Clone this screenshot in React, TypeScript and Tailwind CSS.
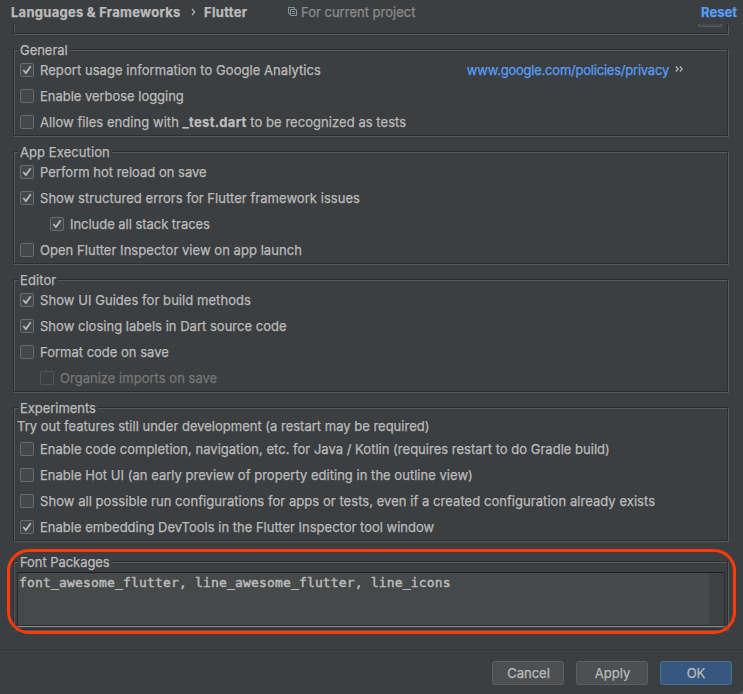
import type { ReactNode } from "react";

function Check({ checked, disabled }: { checked?: boolean; disabled?: boolean }) {
  return (
    <span
      className={
        "h-3.5 w-3.5 shrink-0 rounded-[2px] border " +
        (disabled ? "border-[#525556] bg-[#3c3f41]" : "border-[#6b6b6b] bg-[#43494a]")
      }
    >
      {checked && (
        <svg viewBox="0 0 12 12" className="block h-3 w-3" fill="none">
          <path d="M2.3 6 L4.9 9 L9.7 2.2" stroke="#bbbbbb" strokeWidth="1.7" />
        </svg>
      )}
    </span>
  );
}

type RowProps = {
  children: ReactNode;
  checked?: boolean;
  disabled?: boolean;
  indent?: string;
  tracking?: string;
  extra?: ReactNode;
};

function Row({ children, checked, disabled, indent = "", tracking = "", extra }: RowProps) {
  return (
    <div className={"flex h-[26px] items-center pl-1.5 " + indent}>
      <Check checked={checked} disabled={disabled} />
      <span className={"ml-1.5 whitespace-pre " + (disabled ? "text-[#777777] " : "") + tracking}>{children}</span>
      {extra}
    </div>
  );
}

const etched =
  "border border-[#2b2d2e] shadow-[1px_1px_0_#585b5d,inset_1px_1px_0_#585b5d]";

function Group({ title, size, tracking = "", children }: { title: string; size: string; tracking?: string; children: ReactNode }) {
  return (
    <section className={"relative w-[715px] shrink-0 pt-[7px] " + etched + " " + size}>
      <h2 className={"absolute -top-[9px] left-1 h-[18px] whitespace-pre bg-[#3c3f41] px-0.5 leading-[18px] " + tracking}>
        {title}
      </h2>
      {children}
    </section>
  );
}

function Button({ children, primary }: { children: ReactNode; primary?: boolean }) {
  return (
    <button
      className={
        "h-6 w-[72px] rounded-[3px] border text-[13px] leading-[22px] " +
        (primary ? "border-[#4c708c] bg-[#365880]" : "border-[#5e6060] bg-[#4c5052] pl-px")
      }
    >
      {children}
    </button>
  );
}

export default function App() {
  return (
    <div className="h-[694px] w-[743px] bg-[#5b5d5c]">
      <div className="flex h-full w-full flex-col overflow-hidden rounded-br-[5px] bg-[#3c3f41] font-['Inter',sans-serif] text-[13px] leading-4 text-[#bbbbbb] [-webkit-text-stroke:0.25px]">
        <header className="flex h-6 shrink-0 items-center pb-px pl-[11px] pr-1.5 font-bold">
          <span className="w-[179px] whitespace-pre tracking-[0.27px]">Languages &amp; Frameworks</span>
          <svg viewBox="0 0 5 8" className="ml-px h-2 w-[5px]" fill="none">
            <path d="M1 0.8 L3.6 4 L1 7.2" stroke="#bbbbbb" strokeWidth="1.2" />
          </svg>
          <span className="ml-2 w-[84px] tracking-[0.32px]">Flutter</span>
          <svg viewBox="0 0 9 9" className="h-[9px] w-[9px]" fill="none" stroke="#87939a">
            <path d="M2 6.5H0.5V0.5H6.5V2M2.5 2.5H8.5V8.5H2.5ZM4 4.5H7M4 6.5H7" />
          </svg>
          <span className="ml-1 font-normal text-[#8c8c8c]">For current project</span>
          <span className="ml-auto text-[#589df6]">Reset</span>
        </header>

        <main className="flex min-h-0 flex-1 flex-col pl-[13px]">
          <div className="mb-[15px] h-2.5 w-[715px] shrink-0 border border-t-0 border-[#2b2d2e] pl-[684px] shadow-[1px_1px_0_#585b5d,inset_1px_0_0_#585b5d]">
            <div className="h-[3px] w-6 rounded-b-[3px] border border-t-0 border-[#5e6060] bg-[#45494a]" />
          </div>

          <Group title="General" size="mb-[15px] h-[87px]" tracking="tracking-[-0.03px]">
            <Row
              checked
              tracking="tracking-[0.055px]"
              extra={
                <>
                  <a className="ml-auto whitespace-pre tracking-[-0.22px] text-[#589df6]">www.google.com/policies/privacy</a>
                  <svg viewBox="0 0 8 6" className="mb-0.5 ml-1.5 mr-11 h-1.5 w-2 shrink-0" fill="none">
                    <path d="M0.8 0.5L3.3 3L0.8 5.5M4.8 0.5L7.3 3L4.8 5.5" stroke="#bbbbbb" strokeWidth="1.1" />
                  </svg>
                </>
              }
            >
              Report usage information to Google Analytics
            </Row>
            <Row tracking="tracking-[-0.03px]">Enable verbose logging</Row>
            <Row tracking="tracking-[0.05px]">
              Allow files ending with <b className="tracking-[0.3px]">_test.dart</b> to be recognized as tests
            </Row>
          </Group>

          <Group title="App Execution" size="mb-[15px] h-[113px]" tracking="tracking-[0.08px]">
            <Row checked>Perform hot reload on save</Row>
            <Row checked tracking="tracking-[0.045px]">Show structured errors for Flutter framework issues</Row>
            <Row checked indent="ml-[30px]" tracking="tracking-[-0.04px]">Include all stack traces</Row>
            <Row tracking="tracking-[0.045px]">Open Flutter Inspector view on app launch</Row>
          </Group>

          <Group title="Editor" size="mb-[15px] h-[113px]" tracking="tracking-[0.1px]">
            <Row checked tracking="tracking-[0.055px]">Show UI Guides for build methods</Row>
            <Row checked tracking="tracking-[0.02px]">Show closing labels in Dart source code</Row>
            <Row>Format code on save</Row>
            <Row disabled indent="ml-5" tracking="tracking-[0.02px]">Organize imports on save</Row>
          </Group>

          <Group title="Experiments" size="mb-5 h-[134px]" tracking="tracking-[-0.04px]">
            <p className="mb-px mt-[3px] h-[17px] whitespace-pre pl-[3px] leading-[17px]">
              Try out features still under development (a restart may be required)
            </p>
            <Row tracking="tracking-[0.015px]">
              Enable code completion, navigation, etc. for Java / Kotlin (requires restart to do Gradle build)
            </Row>
            <Row tracking="tracking-[0.025px]">
              Enable Hot UI (an early preview of property editing in the outline view)
            </Row>
            <Row tracking="tracking-[0.05px]">
              Show all possible run configurations for apps or tests, even if a created configuration already exists
            </Row>
            <Row checked>Enable embedding DevTools in the Flutter Inspector tool window</Row>
          </Group>

          <Group title="Font Packages" size="h-[69px]" tracking="tracking-[-0.06px]">
            <div className="ml-[3px] mt-[3px] flex h-[55px] w-[708px] justify-between border border-b-[#8c8e8f] border-l-[#292b2c] border-r-[#292b2c] border-t-[#1c1e1f] bg-[#45494a] shadow-[inset_0_-1px_0_#2b2d2e]">
              <code className="whitespace-pre pl-px pt-0.5 font-['DejaVu_Sans_Mono',monospace] text-[13px] leading-4 tracking-[0.17px] [-webkit-text-stroke:0.45px]">
                font_awesome_flutter, line_awesome_flutter, line_icons
              </code>
              <span className="mb-px w-[15px] bg-[#3f4244]" />
            </div>
            <div className="absolute -left-[7px] -top-[13px] h-[85px] w-[729px] rounded-[22px] border-[3px] border-[#ff3b0a]" />
          </Group>
        </main>

        <footer className="flex h-[45px] shrink-0 justify-end gap-3 border-t border-[#323435] pr-[11px] pt-[11px]">
          <Button>Cancel</Button>
          <Button>Apply</Button>
          <Button primary>OK</Button>
        </footer>
      </div>
    </div>
  );
}
